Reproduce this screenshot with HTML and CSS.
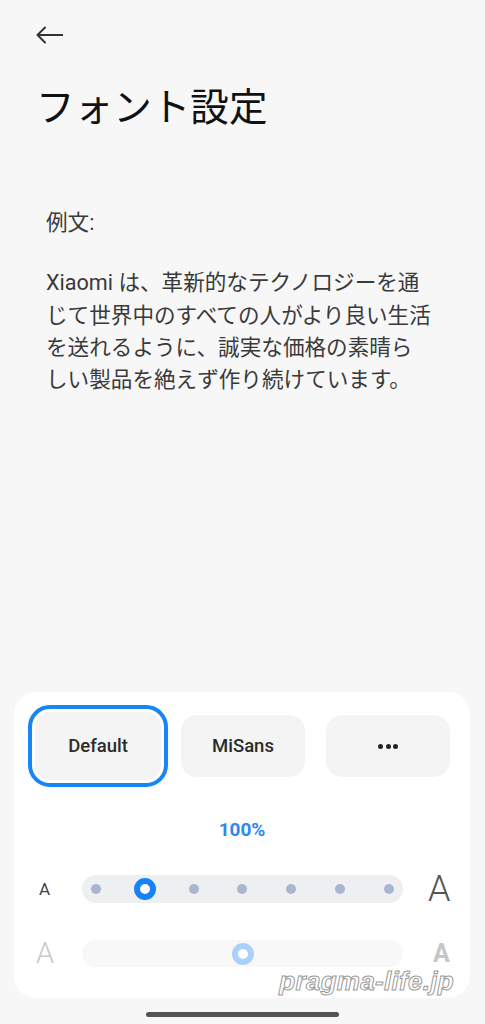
FILE: index.html
```html
<!DOCTYPE html>
<html lang="ja">
<head>
<meta charset="utf-8">
<link rel="stylesheet" href="styles.css">
</head>
<body>
<div class="page">
  <header class="topbar">
    <svg class="back" width="28" height="18" viewBox="0 0 28 18" aria-label="戻る">
      <path d="M27.5 9H2.5M10 1.5L2.5 9L10 16.5" fill="none" stroke="#333" stroke-width="2" stroke-linecap="round" stroke-linejoin="round"/>
    </svg>
  </header>
  <h1 class="title">フォント設定</h1>

  <section class="sample">
    <p class="label">例文:</p>
    <p class="body">Xiaomi は、革新的なテクノロジーを通<br>じて世界中のすべての人がより良い生活<br>を送れるように、誠実な価格の素晴ら<br>しい製品を絶えず作り続けています。</p>
  </section>

  <div class="card">
    <div class="fonts">
      <div class="fbtn active"><span>Default</span></div>
      <div class="fbtn"><span>MiSans</span></div>
      <div class="fbtn" aria-label="その他"><span class="more"><i></i><i></i><i></i></span></div>
    </div>
    <div class="pct">100%</div>
    <div class="slider-row">
      <span class="a-small">A</span>
      <div class="track">
        <span class="dot"></span>
        <span class="thumb"></span>
        <span class="dot"></span>
        <span class="dot"></span>
        <span class="dot"></span>
        <span class="dot"></span>
        <span class="dot"></span>
      </div>
      <span class="a-big">A</span>
    </div>
    <div class="slider-row weight">
      <span class="a-light">A</span>
      <div class="track light">
        <span class="thumb pale"></span>
      </div>
      <span class="a-bold">A</span>
    </div>
    <div class="watermark">pragma-life.jp</div>
  </div>

  <div class="homebar"></div>
</div>
</body>
</html>
```

FILE: styles.css
```css
* { box-sizing: border-box; }
html, body { margin: 0; padding: 0; }
body {
  background: #f7f7f7;
  font-family: Roboto, "Noto Sans CJK JP", sans-serif;
  color: #333;
}
.page {
  width: 485px;
  height: 1024px;
  display: flex;
  flex-direction: column;
}
.topbar {
  height: 44px;
  padding: 26px 0 0 35px;
}
.back { display: block; }
.title {
  margin: 40px 0 0 36px;
  font-family: "Noto Sans CJK JP", sans-serif;
  font-weight: 400;
  font-size: 38.6px;
  line-height: 40px;
  color: #111;
  letter-spacing: 0;
}
.sample {
  padding-left: 46px;
  margin-top: 83px;
  font-family: Roboto, "Noto Sans CJK JP", sans-serif;
  font-size: 21.6px;
  line-height: 32.3px;
  color: #3a3a3a;
}
.sample p { margin: 0; }
.sample .body { margin-top: 28px; white-space: nowrap; }

.card {
  position: relative;
  margin: auto 15px 0 14px;
  background: #fff;
  border-radius: 22px;
  padding: 23px 22px 31px 22px;
}
.fonts {
  display: grid;
  grid-template-columns: repeat(3, 124px);
  grid-auto-rows: 62px;
  column-gap: 21px;
}
.fbtn {
  background: #f4f4f4;
  border-radius: 16px;
  display: flex;
  align-items: center;
  justify-content: center;
  font-size: 18.5px;
  font-weight: 500;
  color: #2b2b2b;
}
.fbtn.active {
  margin: -10px -8px;
  border: 4px solid #1785f6;
  padding: 3px;
  border-radius: 22px;
  background: #f4f4f4;
  background-clip: content-box;
}
.more {
  display: flex;
  gap: 2.5px;
}
.more i {
  display: block;
  width: 5px;
  height: 5px;
  border-radius: 50%;
  background: #222;
}
.pct {
  margin-top: 41px;
  text-align: center;
  font-size: 19px;
  line-height: 24px;
  font-weight: 700;
  color: #2f87f2;
}
.slider-row {
  display: grid;
  grid-template-columns: 46px 321px 1fr;
  align-items: center;
  margin-top: 33px;
  height: 28px;
}
.slider-row.weight {
  margin-top: 37px;
  height: 27px;
}
.track {
  height: 28px;
  border-radius: 14px;
  background: #eeeff1;
  display: flex;
  align-items: center;
  justify-content: space-between;
  padding: 0 9px 0 9px;
}
.track.light {
  height: 27px;
  background: #f8f8f9;
  justify-content: center;
}
.dot {
  width: 10px;
  height: 10px;
  border-radius: 50%;
  background: #a8b6cf;
}
.thumb {
  width: 22px;
  height: 22px;
  border-radius: 50%;
  border: 6px solid #1782f6;
  background: #fff;
  margin: 0 -6px;
}
.thumb.pale {
  border-color: #a9d1fb;
  margin: 0;
}
.a-small {
  padding-left: 3px;
  font-size: 17px;
  color: #444;
  font-weight: 400;
}
.a-big {
  padding-left: 25px;
  font-size: 36px;
  font-weight: 300;
  color: #555;
  line-height: 28px;
}
.a-light {
  padding-left: 0;
  font-size: 29px;
  font-weight: 300;
  color: #c9c9c9;
  line-height: 27px;
}
.a-bold {
  padding-left: 30px;
  font-size: 25px;
  font-weight: 700;
  color: #c6c6c6;
  line-height: 27px;
}
.watermark {
  position: absolute;
  right: 16px;
  bottom: 1px;
  font-family: "Liberation Sans", Arial, sans-serif;
  font-style: italic;
  font-weight: 700;
  font-size: 26px;
  color: #fff;
  -webkit-text-stroke: 1px #9a9a9a;
  letter-spacing: 0.3px;
}
.homebar {
  margin: 14px auto 7px;
  width: 193px;
  height: 5px;
  border-radius: 3px;
  background: #555;
}
```
